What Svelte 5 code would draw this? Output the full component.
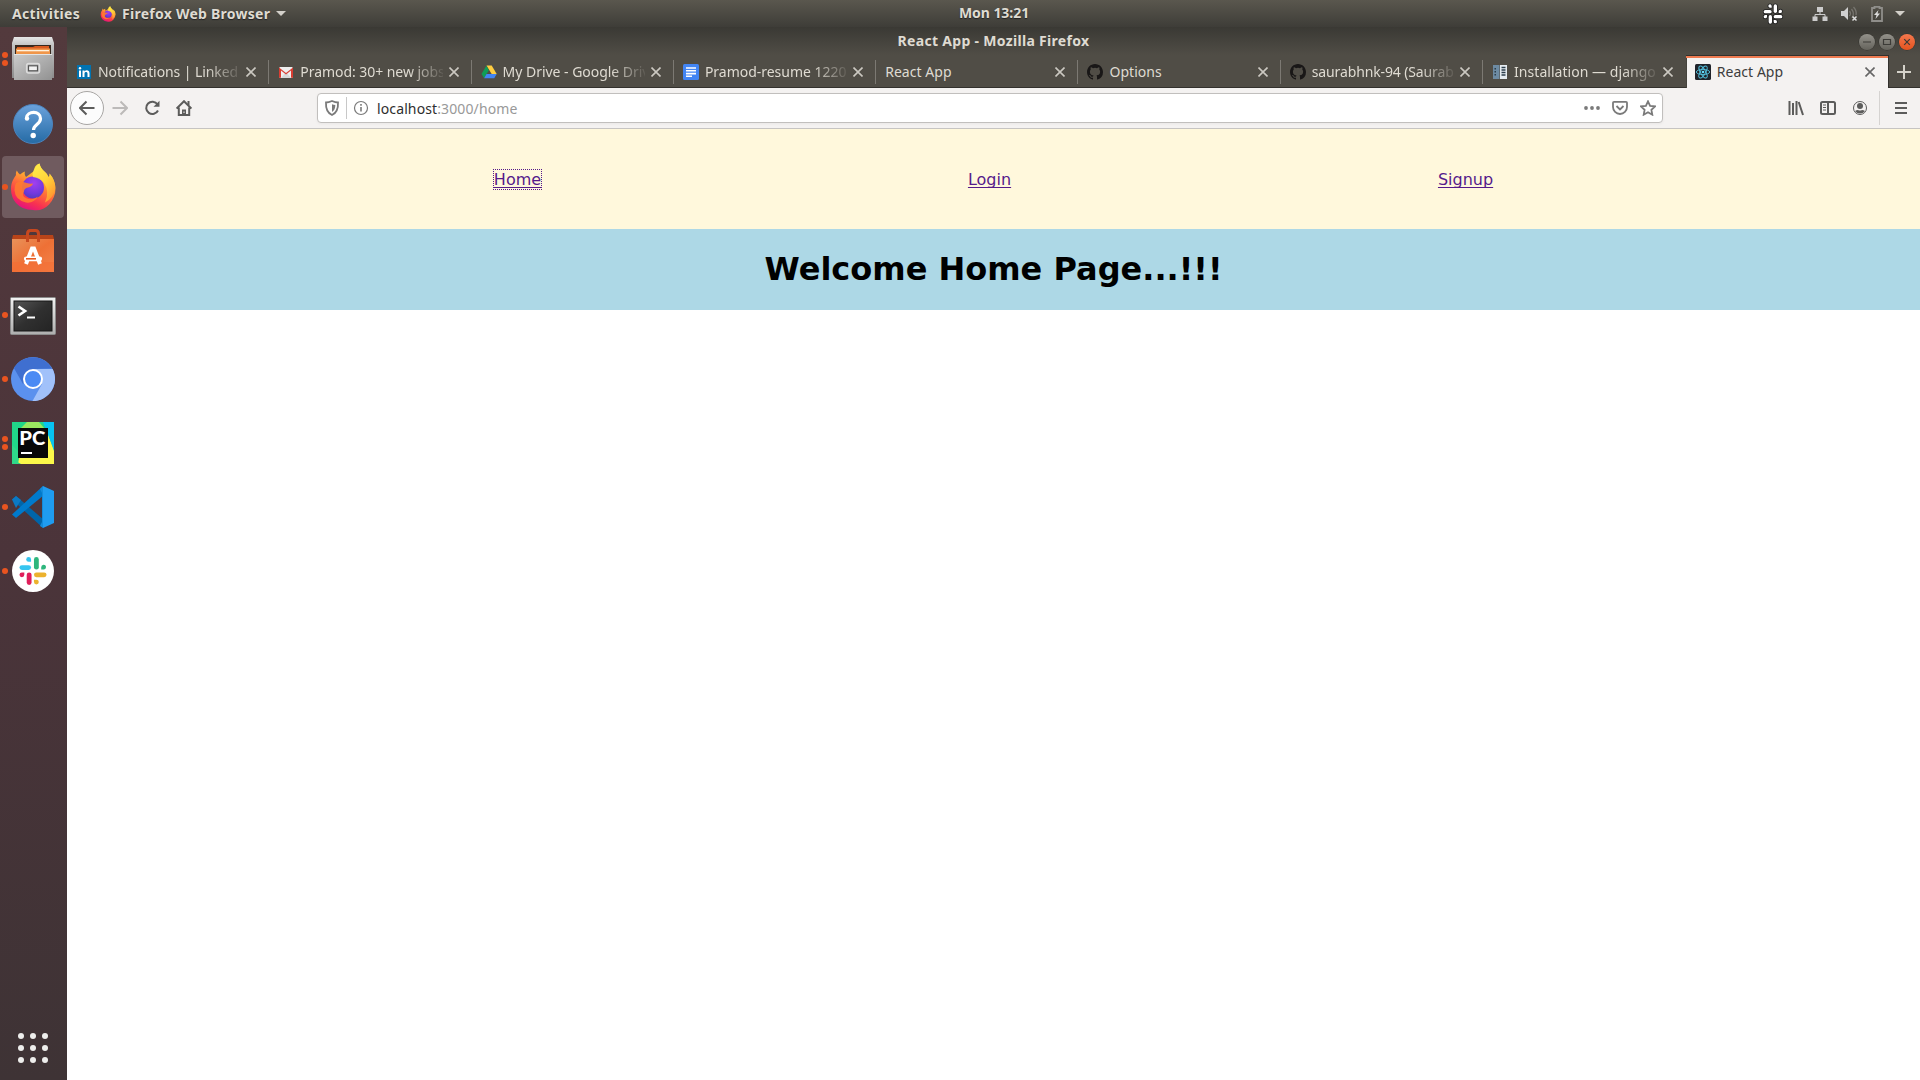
<script>
  const launchers = [
    { id: 'files', dots: 2 },
    { id: 'help', dots: 0 },
    { id: 'firefox', dots: 1, active: true },
    { id: 'software', dots: 0 },
    { id: 'terminal', dots: 1 },
    { id: 'chromium', dots: 1 },
    { id: 'pycharm', dots: 2 },
    { id: 'vscode', dots: 1 },
    { id: 'slack', dots: 1 }
  ];
  const tabs = [
    { icon: 'linkedin', title: 'Notifications | Linked', spacing: -0.08 },
    { icon: 'gmail', title: 'Pramod: 30+ new jobs', spacing: -0.05 },
    { icon: 'drive', title: 'My Drive - Google Driv', spacing: -0.03 },
    { icon: 'docs', title: 'Pramod-resume 1220', spacing: -0.02 },
    { icon: '', title: 'React App' },
    { icon: 'github', title: 'Options' },
    { icon: 'github', title: 'saurabhnk-94 (Saurab', spacing: -0.13 },
    { icon: 'django', title: 'Installation — django' },
    { icon: 'react', title: 'React App', active: true }
  ];
  const links = ['Home', 'Login', 'Signup'];
</script>

{#snippet firefox(id)}
  <defs>
    <linearGradient id="{id}-body" x1=".8" y1="0" x2=".35" y2="1">
      <stop offset="0" stop-color="#fff44f" /><stop offset=".3" stop-color="#ffbd2d" />
      <stop offset=".55" stop-color="#ff7139" /><stop offset=".8" stop-color="#f9334f" /><stop offset="1" stop-color="#e3127e" />
    </linearGradient>
    <radialGradient id="{id}-core" cx=".55" cy=".3" r=".8">
      <stop offset="0" stop-color="#a23ff0" /><stop offset=".6" stop-color="#7139dd" /><stop offset="1" stop-color="#4b3bb4" />
    </radialGradient>
    <linearGradient id="{id}-tail" x1="0" y1="0" x2="1" y2="1">
      <stop offset="0" stop-color="#fff44f" /><stop offset=".5" stop-color="#ffd83c" /><stop offset="1" stop-color="#ff8a2b" />
    </linearGradient>
  </defs>
  <path d="M2 26C2 19 5 15 7 12q-.5-2 .8-4.500Q9 10 11 11.500q3-2.500 5-3-1 3 1 5.500L25 8Q25 2 30.500.5q1 5 5.500 8.500 2.500 2 3.500 5 1.500-1 1-3.500 5.500 6 6 14.500 0 9.500-6.500 16.500T24 47Q13 47 7 40 2 34 2 26z" fill="url(#{id}-body)" />
  <circle cx="24" cy="24.500" r="11" fill="url(#{id}-core)" />
  <path d="M24 14Q22 7 30.500.5q1 5 5.500 8.500 2.500 2 3.500 5 1.500-1 1-3.500 6.500 8 5.500 16-2 9-10 13Q41 29 35 20q-4-5-11-6z" fill="url(#{id}-tail)" opacity=".85" />
  <path d="M7 20q5-2 9-.5 3 1.500 8 1-1 3-5 4-4 .8-4 4-3 5 3 7 6 2 11-2-4 7-12 6Q6 37 5.500 27q0-4 1.500-7z" fill="#ff7a30" opacity=".9" />
{/snippet}

{#snippet slackShape(mono)}
  <g fill={mono ? '#fff' : '#36c5f0'}><rect x="2" y="18" width="24" height="10" rx="5" /><path d="M26 13V8a5 5 0 1 0-5 5z" transform="translate(0-2)" /></g>
  <g fill={mono ? '#fff' : '#2eb67d'}><rect x="32" y="1" width="10" height="26" rx="5" /><path d="M47 27h6a5 5 0 1 0-6-5z" /></g>
  <g fill={mono ? '#fff' : '#ecb22e'}><rect x="32" y="33" width="26" height="10" rx="5" /><path d="M32 48v5a5 5 0 1 0 5-5z" /></g>
  <g fill={mono ? '#fff' : '#e01e5a'}><rect x="17" y="33" width="10" height="26" rx="5" /><path d="M12 33H7a5 5 0 1 0 5 5z" /></g>
{/snippet}

{#snippet launcherIcon(id)}
  <svg class="launcher-icon" viewBox="0 0 48 48">
    {#if id === 'files'}
      <defs>
        <linearGradient id="cab" x1="0" y1="0" x2="1" y2="1"><stop offset="0" stop-color="#cbcbcb" /><stop offset="1" stop-color="#929292" /></linearGradient>
        <linearGradient id="cab-top" x1="0" y1="0" x2="0" y2="1"><stop offset="0" stop-color="#e6e6e6" /><stop offset=".2" stop-color="#c4c4c4" /><stop offset="1" stop-color="#8c8c8c" /></linearGradient>
      </defs>
      <path d="M5 2h38l2 6v35H3V8z" fill="url(#cab-top)" />
      <path d="M6 10h36v10H6z" fill="#38291f" />
      <path d="M8 12h16l2-1h14v8H8z" fill="#d95b20" /><path d="M7 13.500h34V19H7z" fill="#f0964a" /><path d="M8 15h32v1.300H8z" fill="#fff1dc" />
      <path d="M5 19h38v26H5z" fill="url(#cab)" /><path d="M5 19h38v1H5z" fill="#e4e4e4" />
      <rect x="17.700" y="28.500" width="12.800" height="9.500" rx="2" fill="#bbb" stroke="#dcdcdc" stroke-width="1.600" />
      <rect x="19.500" y="30.800" width="9" height="5" fill="#f2f2f2" stroke="#555" stroke-width="1.200" />
    {:else if id === 'help'}
      <defs><linearGradient id="help-bg" x1="0" y1="0" x2="0" y2="1"><stop offset="0" stop-color="#6ba2dc" /><stop offset="1" stop-color="#256ba5" /></linearGradient></defs>
      <circle cx="24" cy="25" r="19.500" fill="url(#help-bg)" stroke="#4b83bd" />
      <path d="M17.500 19c.5-7.500 14-7.500 14 .5 0 6-7 6-7 11.500" fill="none" stroke="#fff" stroke-width="3.200" />
      <circle cx="18" cy="19.500" r="2.200" fill="#fff" /><circle cx="24.200" cy="36.500" r="2.700" fill="#fff" />
    {:else if id === 'firefox'}
      {@render firefox('dock-ff')}
    {:else if id === 'software'}
      <defs><linearGradient id="bag" x1="0" y1="0" x2="1" y2="1"><stop offset="0" stop-color="#e8925a" /><stop offset=".5" stop-color="#ee7035" /><stop offset="1" stop-color="#f4844d" /></linearGradient></defs>
      <g transform="translate(0 1)">
        <path d="M4 7h40l1 4H3z" fill="#b84419" /><path d="M3 11h42v33H3z" fill="url(#bag)" /><path d="M3 34h42v10H3z" fill="#f36e35" opacity=".65" />
        <path d="M18.500 14V6q0-3.500 3-3.500h5q3 0 3 3.500v8" fill="none" stroke="#c7481f" stroke-width="3" />
        <path d="m17 36 6-15.500h2L31 36" fill="none" stroke="#fff" stroke-width="4" />
        <rect x="15.500" y="29" width="17" height="3.600" rx="1.800" fill="#fff" stroke="#fff" stroke-width="1.200" /><path d="M17 30h10v1.600H17z" fill="#e95b20" />
      </g>
    {:else if id === 'terminal'}
      <defs>
        <linearGradient id="term-frame" x1="0" y1="0" x2="0" y2="1"><stop offset="0" stop-color="#f2f2f2" /><stop offset="1" stop-color="#aeaeae" /></linearGradient>
        <linearGradient id="term-bg" x1="0" y1="0" x2="1" y2="1"><stop offset="0" stop-color="#555" /><stop offset=".5" stop-color="#303030" /><stop offset="1" stop-color="#242424" /></linearGradient>
      </defs>
      <g transform="translate(0 1)">
        <rect x="1.500" y="5.500" width="45" height="37" rx="1" fill="url(#term-frame)" stroke="#8b8b8b" />
        <rect x="5" y="9" width="38" height="30" fill="url(#term-bg)" stroke="#171717" />
        <path d="m9.500 14.500 6.500 4.500-6.500 4.500" fill="none" stroke="#fff" stroke-width="2.700" /><path d="M18 25.500h8" stroke="#fff" stroke-width="2" />
      </g>
    {:else if id === 'chromium'}
      <circle cx="24" cy="24" r="22" fill="#5b91ee" />
      <path d="M4.900 13A22 22 0 0 1 43 13.500L24 14 14 29z" fill="#3f6fd0" />
      <path d="M24 14h19.600A22 22 0 0 1 23.500 46l9.500-17z" fill="#a1c1fa" />
      <circle cx="24" cy="24" r="9" fill="#4a8af4" stroke="#fff" stroke-width="2" />
    {:else if id === 'pycharm'}
      <path d="M3 3h42v42H3z" fill="#21d789" /><path d="M18 3h12l5 6H12z" fill="#9be860" />
      <path d="M38 12 45 32v13H12L3 40l6-5z" fill="#fcf84a" /><path d="m3 26 8 8-2 11H3z" fill="#2fd98a" /><path d="M34 3h11v28z" fill="#07c3f2" />
      <path d="M9 9h30v30H9z" fill="#080808" />
      <text x="10.300" y="25.500" class="pc-label" textLength="26" lengthAdjust="spacingAndGlyphs">PC</text><path d="M12 33h11v2H12z" fill="#fff" />
    {:else if id === 'vscode'}
      <path d="M3 16.500 7 13l28 24-1 8z" fill="#0065a9" /><path d="m3 31.500 4 3.500L35 12l-1-9z" fill="#007acc" />
      <path d="m3 16.500 4-3.500 5 4-5 8z" fill="#0b79c4" /><path d="M34 3 45 8v32l-11 5z" fill="#1f9cf0" /><path d="M34 3v42l-3-2 2-4V10l-2-4z" fill="#138bda" />
    {:else}
      <circle cx="24" cy="24" r="21" fill="#fff" />
      <svg x="9.500" y="9.500" width="29" height="29" viewBox="0 0 60 60">{@render slackShape(false)}</svg>
    {/if}
  </svg>
{/snippet}

{#snippet favicon(id)}
  <svg class="favicon" viewBox="0 0 16 16">
    {#if id === 'linkedin'}
      <path d="M1 1h14v14H1z" fill="#0073b1" /><path d="M3 6.500h2V13H3zM6.500 6.500h2v1c1.500-2 5-1.500 5 1.700V13h-2V9.600c0-2-3-2-3 0V13h-2z" fill="#fff" /><circle cx="4" cy="4.200" r="1.200" fill="#fff" />
    {:else if id === 'gmail'}
      <path d="M1.500 3h13v11h-13z" fill="#eee" /><path d="m3 14 5-6 5 6z" fill="#d7d7d7" /><path d="M1 13.800V3.500L8 9l7-5.500v10.300h-2V6.500l-5 4-5-4v7.300z" fill="#d93d32" />
    {:else if id === 'drive'}
      <path d="M5.500 1.500h5.200l5 8.500h-5z" fill="#ffcd40" /><path d="m5.300 1.800 2.600 4.400-4.800 8.100L.5 10z" fill="#0f9d58" /><path d="M5.500 10h10.200l-2.500 4.300H3.100z" fill="#4285f4" />
    {:else if id === 'docs'}
      <rect width="16" height="16" rx="1.500" fill="#4285f4" /><path d="M3 3.200h10v1.600H3zM3 6h10v1.600H3zM3 8.800h10v1.600H3zM3 11.500h6v1.600H3z" fill="#fff" />
    {:else if id === 'github'}
      <path fill="#191717" d="M8 0C3.580 0 0 3.580 0 8c0 3.540 2.290 6.530 5.470 7.590.4.070.55-.17.55-.38 0-.19-.01-.82-.01-1.490-2.010.37-2.530-.49-2.690-.94-.09-.23-.48-.94-.82-1.130-.28-.15-.68-.52-.01-.53.63-.01 1.080.58 1.230.82.72 1.210 1.870.87 2.330.66.07-.52.28-.87.51-1.070-1.780-.2-3.640-.89-3.640-3.950 0-.87.31-1.590.82-2.150-.08-.2-.36-1.020.08-2.120 0 0 .67-.21 2.200.82a7.700 7.700 0 0 1 4 0c1.530-1.040 2.200-.82 2.200-.82.44 1.100.16 1.920.08 2.120.51.56.82 1.270.82 2.150 0 3.070-1.870 3.750-3.650 3.950.29.25.54.73.54 1.480 0 1.070-.01 1.930-.01 2.200 0 .21.15.46.55.38A8.010 8.010 0 0 0 16 8c0-4.420-3.580-8-8-8z" />
    {:else if id === 'django'}
      <path d="M1 1h6.500v14H1z" fill="#6d8ba3" /><path d="M8 1h7v14H8z" fill="#e6edf2" />
      <path d="M2.500 4h1.500v1.500H2.500zM2.500 7h1.500v1.500H2.500zM2.500 10h1.500v1.500H2.500z" fill="#2c3e4c" /><path d="M9.500 3.500h4M9.500 6h4M9.500 8.500h4M9.500 11h4" stroke="#2c3e4c" stroke-width="1.300" />
    {:else}
      <rect width="16" height="16" rx="1.500" fill="#20232a" />
      <g fill="none" stroke="#53c1de" stroke-width=".9"><ellipse cx="8" cy="8" rx="6.700" ry="2.600" /><ellipse cx="8" cy="8" rx="6.700" ry="2.600" transform="rotate(60 8 8)" /><ellipse cx="8" cy="8" rx="6.700" ry="2.600" transform="rotate(120 8 8)" /></g><circle cx="8" cy="8" r="1.300" fill="#61dafb" />
    {/if}
  </svg>
{/snippet}

<div class="desktop">
  <header class="topbar">
    <div class="top-left">
      <span class="activities">Activities</span>
      <svg class="app-icon" viewBox="0 0 48 48">{@render firefox('bar-ff')}</svg>
      <span class="app-name">Firefox Web Browser</span>
      <svg class="caret" viewBox="0 0 10 5"><path d="M0 0h10L5 5z" /></svg>
    </div>
    <span class="clock">Mon 13:21</span>
    <div class="tray">
      <svg class="tray-slack" viewBox="-3 -3 66 66"><g stroke="#222" stroke-width="5" paint-order="stroke">{@render slackShape(true)}</g></svg>
      <svg class="tray-network" viewBox="0 0 16 16"><path d="M5 1h6v5H5zM.5 10.500h5V15h-5zM10.500 10.500h5V15h-5z" fill="#ccc" /><path d="M8 5v3.500M3 11V8.500h10V11" fill="none" stroke="#ccc" /></svg>
      <svg class="tray-volume" viewBox="0 0 18 16"><path d="M1 5h3l4-4v13l-4-4H1z" fill="#d0d0d0" /><path d="M9.500 5q2 2.500 0 5M11.500 3q3.500 4.500.5 9M13.500 1q3.500 4 2.500 8" fill="none" stroke="#77756f" stroke-width="1.300" /><path d="m12.500 10.500 4 4m0-4-4 4" stroke="#ddd" stroke-width="1.500" /></svg>
      <svg class="tray-battery" viewBox="0 0 12 16"><path d="M3.500 2V.8h5V2H11v13H1V2z" fill="none" stroke="#8f8e8a" stroke-width="1.800" /><path d="M7.500 4 3 9h2.500L4.500 13 9 7.500H6.500z" fill="#ddd" /></svg>
      <svg class="caret" viewBox="0 0 10 5"><path d="M0 0h10L5 5z" /></svg>
    </div>
  </header>

  <div class="workspace">
    <aside class="dock">
      {#each launchers as item}
        <div class="launcher" class:active={item.active}>
          <div class="dots">{#each Array(item.dots) as _}<i></i>{/each}</div>
          {@render launcherIcon(item.id)}
        </div>
      {/each}
      <div class="apps-grid">{#each Array(9) as _}<i></i>{/each}</div>
    </aside>

    <section class="window">
      <div class="titlebar">
        <span></span>
        <span class="window-title">React App - Mozilla Firefox</span>
        <div class="controls">
          <svg viewBox="0 0 16 16"><path d="M4 8h8" /></svg>
          <svg viewBox="0 0 16 16"><path d="M4.500 5.500h7v5h-7z" /></svg>
          <svg class="close-window" viewBox="0 0 16 16"><path d="m5.200 5.200 5.600 5.600m0-5.600-5.600 5.600" /></svg>
        </div>
      </div>

      <div class="tabstrip">
        {#each tabs as tab}
          <div class="tab" class:active={tab.active}>
            {#if tab.icon}{@render favicon(tab.icon)}{/if}
            <span class="tab-title" class:fade={tab.title.length > 12} style:letter-spacing="{tab.spacing ?? 0.04}px">{tab.title}</span>
            <svg class="tab-close" viewBox="0 0 10 10"><path d="m.5.5 9 9m0-9-9 9" /></svg>
          </div>
        {/each}
        <div class="new-tab"><svg viewBox="0 0 14 14"><path d="M7 0v14M0 7h14" /></svg></div>
      </div>

      <div class="toolbar">
        <div class="nav-buttons">
          <div class="back"><svg viewBox="0 0 16 16"><path d="M15.500 8H1.500M7.500 1.500 1 8l6.500 6.500" /></svg></div>
          <svg class="disabled" viewBox="0 0 16 16"><path d="M.5 8h14M8.500 1.500 15 8l-6.500 6.500" /></svg>
          <svg viewBox="0 0 16 16"><path d="M13.500 4.300A6.200 6.200 0 1 0 14 10.500" /><path d="M15.500.8v6H9.500z" class="solid" /></svg>
          <svg viewBox="0 0 16 16"><path d="M.6 8.600 8 1.200l7.400 7.400M2.800 7.500v7.400h10.400V7.500" /><path d="M11.500 1h2v4h-2zM6 9.500h4V15H6z" class="solid" /><path d="M7.500 11.500h1V13h-1z" fill="#f4f2f1" stroke="none" /></svg>
        </div>

        <div class="urlbar">
          <svg class="shield" viewBox="0 0 16 16"><path d="M8 1Q4.500 2.500 2 2.500 1.500 12 8 15q6.500-3 6-12.500Q11.500 2.500 8 1z" /><path d="M8 4.300q1.500.6 3.300.7.100 5-3.300 7z" class="solid" /></svg>
          <i class="url-divider"></i>
          <svg class="info" viewBox="0 0 16 16"><circle cx="8" cy="8" r="6.500" /><path d="M7.200 7h1.600v4.500H7.200zM7.200 4h1.600v1.700H7.200z" class="solid" /></svg>
          <span class="address"><b>localhost</b>:3000/home</span>
          <div class="url-actions">
            <svg viewBox="0 0 16 16"><g class="solid"><circle cx="2" cy="8" r="1.900" /><circle cx="8" cy="8" r="1.900" /><circle cx="14" cy="8" r="1.900" /></g></svg>
            <svg viewBox="0 0 16 16"><path d="M2 1.800h12q1 0 1 1V7a7 7 0 0 1-14 0V2.800q0-1 1-1z" /><path d="m4.500 6 3.500 3.500L11.500 6" /></svg>
            <svg viewBox="0 0 16 16"><path d="m8 1.300 2.100 4.500 4.900.6-3.600 3.400.9 4.900L8 12.300l-4.300 2.400.9-4.900L1 6.400l4.900-.6z" /></svg>
          </div>
        </div>

        <div class="tools">
          <svg viewBox="0 0 16 16"><path d="M1.500 1v14M5 3v12M8.500 1v14M10.700 2l4.300 13" /></svg>
          <svg viewBox="0 0 16 16"><rect x="1" y="2" width="14" height="12" rx="1.500" /><path d="M8 2v12" /><path d="M3 5h3M3 7.500h3M3 10h3" stroke-width="1" /></svg>
          <svg viewBox="0 0 16 16"><circle cx="8" cy="8" r="6.500" class="thin" /><circle cx="8" cy="6" r="3" class="solid" /><path d="M3 11q1.500-1 3-1 2 1 4 0 1.500 0 3 1-2 2.500-5 2.500T3 11z" class="solid" /></svg>
          <i class="tool-divider"></i>
          <svg viewBox="0 0 16 16"><path d="M2 3h12M2 8h12M2 13h12" /></svg>
        </div>
      </div>

      <main class="page">
        <nav>{#each links as link, i}<a href="#{link}" class:focused={i === 0}>{link}</a>{/each}</nav>
        <h1>Welcome Home Page...!!!</h1>
      </main>
    </section>
  </div>
</div>

<style>
  :global(body) { margin: 0; overflow: hidden; }
  svg { display: block; flex: none; }
  .desktop { width: 1920px; height: 1080px; display: flex; flex-direction: column; font: 14px/20px "Noto Sans", "Open Sans", sans-serif; background: #fff; }
  .topbar { height: 27px; display: flex; justify-content: space-between; background: linear-gradient(#5a574e, #3e3d38); color: #dfdbd2; font-weight: 700; text-shadow: 0 1px 1px #222; flex: none; }
  .top-left { width: 947px; box-sizing: border-box; display: flex; align-items: center; padding-left: 12px; }
  .activities { width: 88px; letter-spacing: .3px; }
  .app-icon { width: 16px; height: 16px; }
  .app-name { margin-left: 6px; width: 154px; letter-spacing: .26px; white-space: nowrap; }
  .caret { width: 10px; height: 5px; fill: #d3d0ca; }
  .clock { width: 94px; line-height: 26px; text-align: center; letter-spacing: -.05px; white-space: nowrap; }
  .tray { flex: 1; display: flex; align-items: center; justify-content: flex-end; padding-right: 15px; }
  .tray-slack { width: 22px; height: 22px; margin-right: 28px; }
  .tray-network { width: 16px; height: 16px; margin-right: 12px; }
  .tray-volume { width: 18px; height: 16px; margin-right: 13px; }
  .tray-battery { width: 12px; height: 16px; margin-right: 12px; }

  .workspace { flex: 1; display: flex; min-height: 0; }
  .dock { width: 67px; flex: none; display: flex; flex-direction: column; background: linear-gradient(#533a3d, #4b343a 50%, #3e3335); }
  .launcher { height: 62px; margin: 1px 3px 1px 2px; border-radius: 4px; display: flex; align-items: center; flex: none; }
  .launcher.active { background: #705b5f; }
  .dots { width: 7px; margin-left: -1px; margin-right: 1px; display: flex; flex-direction: column; align-items: center; gap: 2.500px; }
  .dots i { width: 6px; height: 6px; border-radius: 50%; background: #e95420; }
  .launcher-icon { width: 48px; height: 48px; }
  .pc-label { font: 900 19px Lato, "Open Sans", sans-serif; fill: #fff; }
  .apps-grid { margin: auto 0 17px 18px; display: grid; grid-template-columns: repeat(3, 6px); gap: 6px; }
  .apps-grid i { width: 6px; height: 6px; border-radius: 50%; background: #eeeeec; }

  .window { flex: 1; min-width: 0; display: flex; flex-direction: column; background: #fff; }
  .titlebar { height: 28px; display: grid; grid-template-columns: 1fr auto 1fr; align-items: center; background: linear-gradient(#3a3934, #504d46); color: #dfdbd2; flex: none; }
  .window-title { font-weight: 700; letter-spacing: .31px; line-height: 28px; margin-bottom: 1px; }
  .controls { display: flex; justify-content: flex-end; gap: 4px; padding-right: 5px; }
  .controls svg { width: 16px; height: 16px; border-radius: 50%; background: linear-gradient(#94928b, #65635c); box-shadow: 0 0 0 .5px #33322e; fill: none; stroke: #3c3b37; stroke-width: 1.200; }
  .controls .close-window { background: linear-gradient(#f4784e, #e4531e); }

  .tabstrip { height: 33px; display: flex; background: #504d46; box-shadow: inset 0 -1px #33312d; flex: none; }
  .tab { flex: none; width: 202.300px; height: 33px; box-sizing: border-box; padding: 1px 13px 0 9px; display: flex; align-items: center; color: #dfdbd2; background: linear-gradient(#7c7973, #7c7973) right 0 top 5px / 1px 24px no-repeat; }
  .tab:nth-child(8) { background: none; width: 202.700px; }
  .tab.active { width: 202px; background: #f4f2f1; color: #3d3d3d; box-shadow: inset 0 1px #33312d, inset 0 3px #ee7a50, inset 1px 0 #45433d, 1px 0 #33312d; }
  .favicon { width: 16px; height: 16px; margin-right: 6px; }
  .tab-title { flex: 1; min-width: 0; white-space: nowrap; margin-right: 6px; }
  .tab-title.fade { mask-image: linear-gradient(90deg, #000 calc(100% - 34px), transparent calc(100% + 4px)); }
  .tab-close { width: 10px; height: 10px; fill: none; stroke: #cbc8c1; stroke-width: 1.600; }
  .tab.active .tab-close { stroke: #666; }
  .new-tab { flex: 1; display: grid; place-items: center; }
  .new-tab svg { width: 14px; height: 14px; stroke: #d5d2ca; stroke-width: 2; }

  .toolbar { height: 41px; box-sizing: border-box; border-bottom: 1px solid #c6c4c2; background: #f4f2f1; display: flex; align-items: center; flex: none; }
  .toolbar svg { width: 16px; height: 16px; fill: none; stroke: #5c5c5b; stroke-width: 2; }
  .toolbar .solid { fill: #5c5c5b; stroke: none; }
  .toolbar .thin { stroke-width: 1; }
  .nav-buttons { width: 250px; box-sizing: border-box; padding-left: 3px; display: flex; align-items: center; gap: 16px; }
  .back { width: 32px; height: 32px; border: 1px solid #a8a6a4; border-radius: 50%; background: #fcfcfc; display: grid; place-items: center; margin-right: -8px; }
  .toolbar .disabled { stroke: #bcbab9; }
  .urlbar { width: 1346px; height: 30px; box-sizing: border-box; border: 1px solid #c1bfbd; border-radius: 4px; background: #fff; display: flex; align-items: center; padding: 0 6px; box-shadow: 0 1px 3px #0000000c; }
  .urlbar svg { stroke: #7a7a7a; stroke-width: 1.800; }
  .urlbar .solid { fill: #7a7a7a; }
  .url-divider { width: 1px; height: 22px; background: #c8c8c8; margin: 0 6px; }
  .urlbar .info { stroke-width: 1.200; }
  .address { margin-left: 8px; padding-top: 2px; letter-spacing: .12px; color: #999; }
  .address b { color: #2e2e2e; font-weight: 400; }
  .url-actions { margin-left: auto; display: flex; gap: 12px; }
  .tools { margin-left: auto; display: flex; align-items: center; padding-right: 11px; gap: 16px; }
  .tool-divider { width: 1px; height: 34px; background: #d5d3d1; margin: 0 -3px 0 -5px; }

  .page { font: 16px/19px "DejaVu Sans", sans-serif; }
  nav { height: 100px; background: #fff8dc; display: flex; justify-content: space-evenly; align-items: flex-start; padding-top: 41px; box-sizing: border-box; }
  nav a { color: #551a8b; text-decoration: underline; text-underline-offset: 2px; text-decoration-thickness: 1px; text-decoration-skip-ink: none; }
  nav a.focused { outline: 1px dotted #551a8b; }
  h1 { margin: 0; height: 81px; line-height: 81px; font-size: 32px; text-align: center; background: #add8e6; color: #000; }
</style>
